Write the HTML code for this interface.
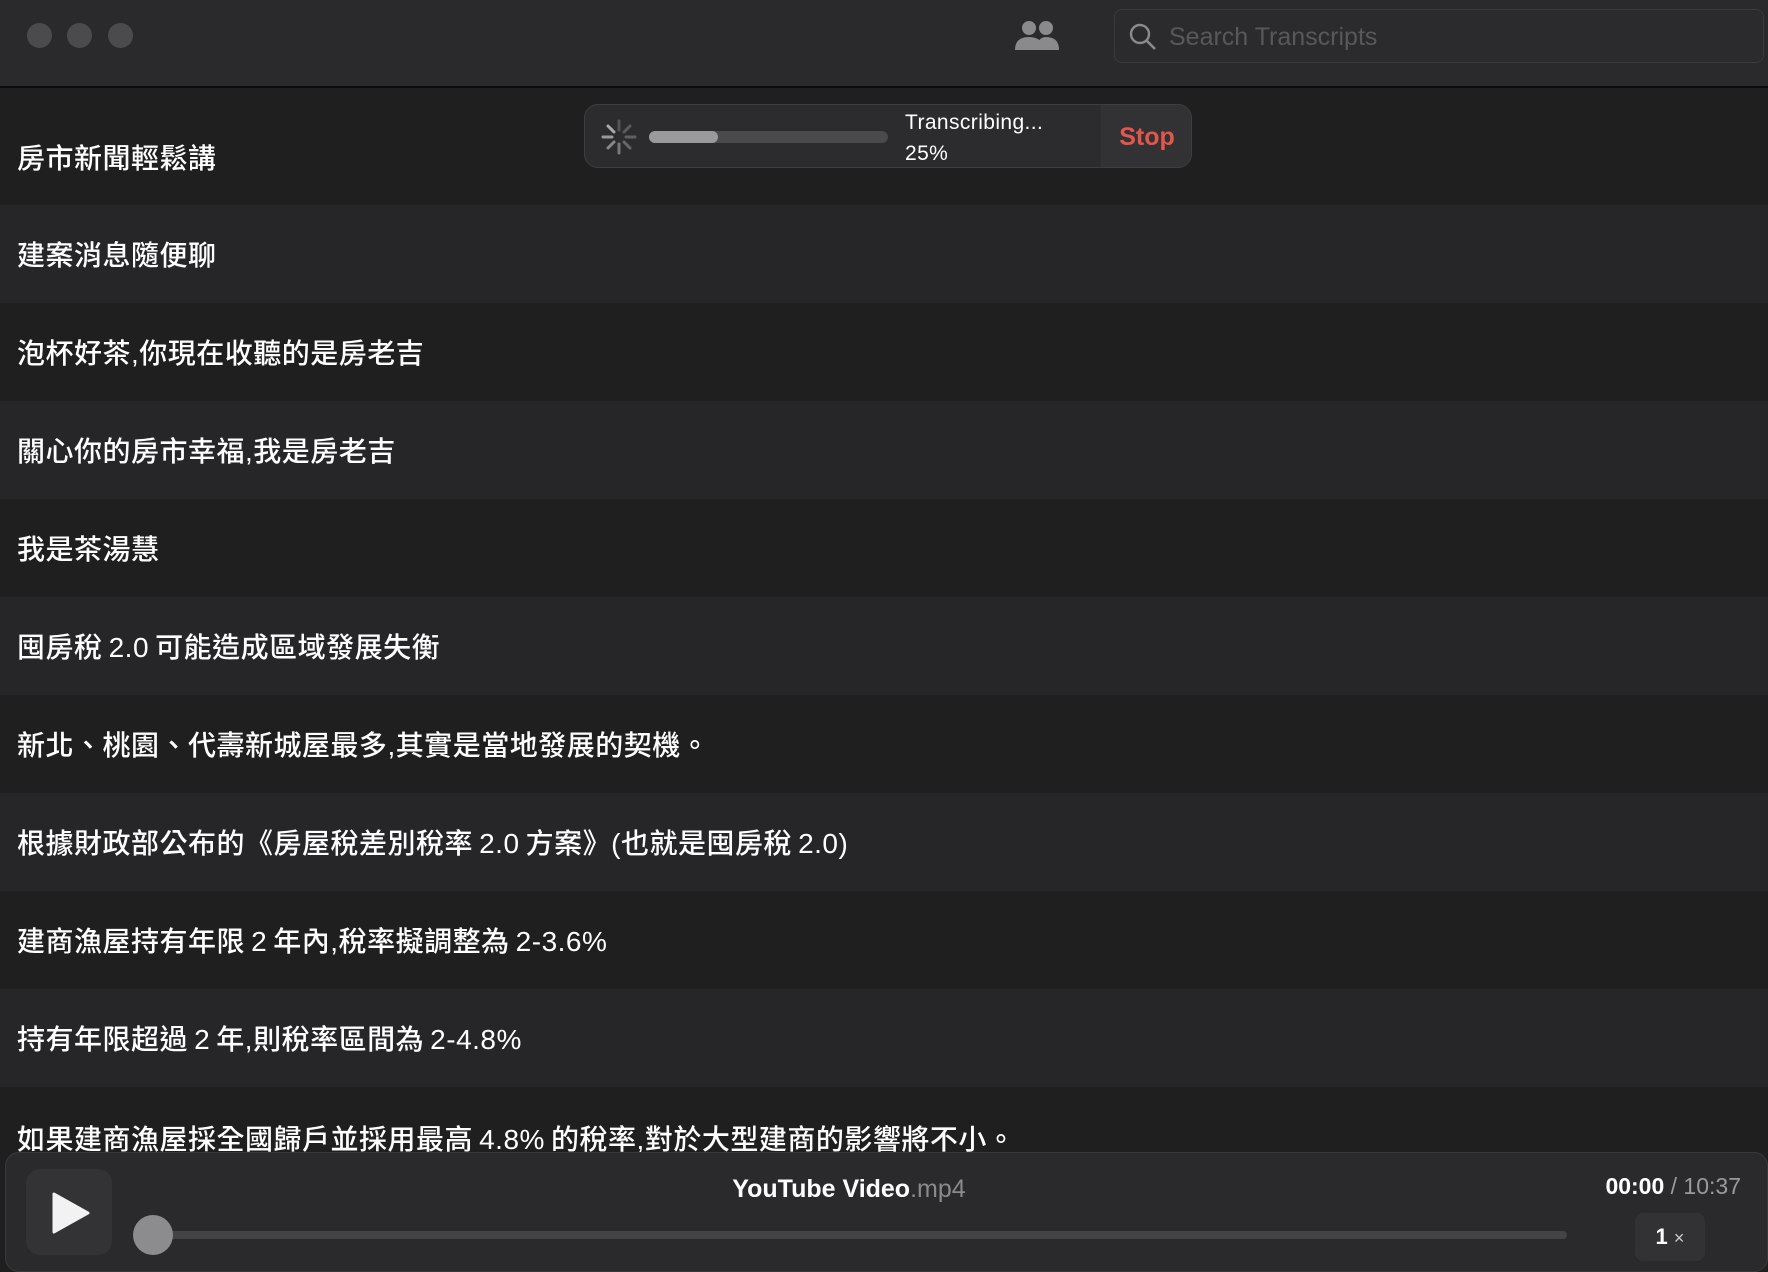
<!DOCTYPE html>
<html><head><meta charset="utf-8"><style>
*{margin:0;padding:0;box-sizing:border-box}
body{width:1768px;height:1266px;background:#1f1f20;overflow:hidden;position:relative;font-family:"Liberation Sans","Noto Sans CJK TC",sans-serif;color:#fff}
.hdr{position:absolute;left:0;top:0;width:1768px;height:88px;background:#2a2a2c;border-bottom:2px solid #0c0c0c}
.dot{position:absolute;top:23px;width:25px;height:25px;border-radius:50%;background:#4b4b4d}
.search{position:absolute;left:1114px;top:9px;width:650px;height:54px;border:1px solid #3a3a3c;border-radius:8px;background:#2b2b2d}
.search span{position:absolute;left:54px;top:13px;font-size:25px;color:#58585a}
.row{position:absolute;left:0;width:1768px;height:98px;font-size:28px;letter-spacing:0.5px;font-weight:500;padding-left:17px;display:flex;align-items:center}
.a{background:#1f1f20}.b{background:#262628}
.pill{position:absolute;left:584px;top:104px;width:608px;height:64px;background:#2c2c2e;border:1px solid #3e3e40;border-radius:14px;overflow:hidden}
.player{position:absolute;left:5px;top:1152px;width:1763px;height:120px;background:#2a2a2c;border:1px solid #3a3a3c;border-radius:14px}
</style></head><body>
<div class="hdr">
<div class="dot" style="left:27px"></div><div class="dot" style="left:67px"></div><div class="dot" style="left:108px"></div>
<svg style="position:absolute;left:1013px;top:20px" width="48" height="32" viewBox="0 0 48 32"><circle cx="16" cy="8" r="7" fill="#8a8a8c"/><circle cx="33" cy="8" r="7" fill="#8a8a8c"/><path d="M2 30 Q2 17 16 17 Q30 17 30 30Z" fill="#8a8a8c"/><path d="M24 30 Q24 17 33 17 Q46 17 46 30Z" fill="#8a8a8c"/></svg>
<div class="search"><svg style="position:absolute;left:14px;top:13px" width="28" height="28" viewBox="0 0 28 28"><circle cx="11" cy="11" r="9" fill="none" stroke="#8a8a8c" stroke-width="2.4"/><path d="M18 18L26 26" stroke="#8a8a8c" stroke-width="2.6"/></svg><span>Search Transcripts</span></div>
</div>
<div class="row a" style="top:90px;height:115px;padding-top:18px">房市新聞輕鬆講</div>
<div class="row b" style="top:205px">建案消息隨便聊</div>
<div class="row a" style="top:303px">泡杯好茶,你現在收聽的是房老吉</div>
<div class="row b" style="top:401px">關心你的房市幸福,我是房老吉</div>
<div class="row a" style="top:499px">我是茶湯慧</div>
<div class="row b" style="top:597px">囤房稅&thinsp;2.0&thinsp;可能造成區域發展失衡</div>
<div class="row a" style="top:695px">新北、桃園、代壽新城屋最多,其實是當地發展的契機。</div>
<div class="row b" style="top:793px">根據財政部公布的《房屋稅差別稅率&thinsp;2.0&thinsp;方案》(也就是囤房稅&thinsp;2.0)</div>
<div class="row a" style="top:891px">建商漁屋持有年限&thinsp;2&thinsp;年內,稅率擬調整為&thinsp;2-3.6%</div>
<div class="row b" style="top:989px">持有年限超過&thinsp;2&thinsp;年,則稅率區間為&thinsp;2-4.8%</div>
<div class="row a" style="top:1087px;align-items:flex-start;padding-top:31px">如果建商漁屋採全國歸戶並採用最高&thinsp;4.8%&thinsp;的稅率,對於大型建商的影響將不小。</div>
<div class="pill">
<svg style="position:absolute;left:15px;top:13px" width="38" height="38" viewBox="-19 -19 38 38"><g stroke-width="3" stroke-linecap="round"><line x1="0" y1="-7" x2="0" y2="-16" stroke="#555"/><line x1="5" y1="-5" x2="11" y2="-11" stroke="#5a5a5a"/><line x1="7" y1="0" x2="16" y2="0" stroke="#606060"/><line x1="5" y1="5" x2="11" y2="11" stroke="#666"/><line x1="0" y1="7" x2="0" y2="16" stroke="#777"/><line x1="-5" y1="5" x2="-11" y2="11" stroke="#888"/><line x1="-7" y1="0" x2="-16" y2="0" stroke="#999"/><line x1="-5" y1="-5" x2="-11" y2="-11" stroke="#aaa"/></g></svg>
<div style="position:absolute;left:64px;top:26px;width:239px;height:12px;border-radius:6px;background:#4a4a4c"><div style="width:69px;height:12px;border-radius:6px;background:#9a9a9c"></div></div>
<div style="position:absolute;left:320px;top:2px;font-size:21px;line-height:31px;letter-spacing:0.4px">Transcribing...<br>25%</div>
<div style="position:absolute;left:516px;top:0;width:92px;height:64px;background:#323234;color:#e2574b;font-weight:bold;font-size:25px;line-height:64px;text-align:center">Stop</div>
</div>
<div class="player">
<div style="position:absolute;left:20px;top:16px;width:86px;height:86px;background:#333335;border-radius:14px"><svg style="position:absolute;left:24px;top:22px" width="42" height="44" viewBox="0 0 42 44"><path d="M4 3L38 22L4 41Z" fill="#f2f2f2" stroke="#f2f2f2" stroke-width="3" stroke-linejoin="round"/></svg></div>
<div style="position:absolute;left:0;width:1686px;text-align:center;top:22px;font-size:25px"><b>YouTube Video</b><span style="color:#8a8a8c">.mp4</span></div>
<div style="position:absolute;right:26px;top:20px;font-size:23px"><b>00:00</b><span style="color:#9a9a9c"> / 10:37</span></div>
<div style="position:absolute;left:147px;top:78px;width:1414px;height:8px;border-radius:4px;background:#444446"></div>
<div style="position:absolute;left:127px;top:62px;width:40px;height:40px;border-radius:50%;background:#8c8c8e"></div>
<div style="position:absolute;left:1629px;top:60px;width:70px;height:48px;border-radius:8px;background:#323234;text-align:center;line-height:48px;font-size:22px"><b>1</b> <span style="font-size:18px;color:#ccc">×</span></div>
</div>
</body></html>
